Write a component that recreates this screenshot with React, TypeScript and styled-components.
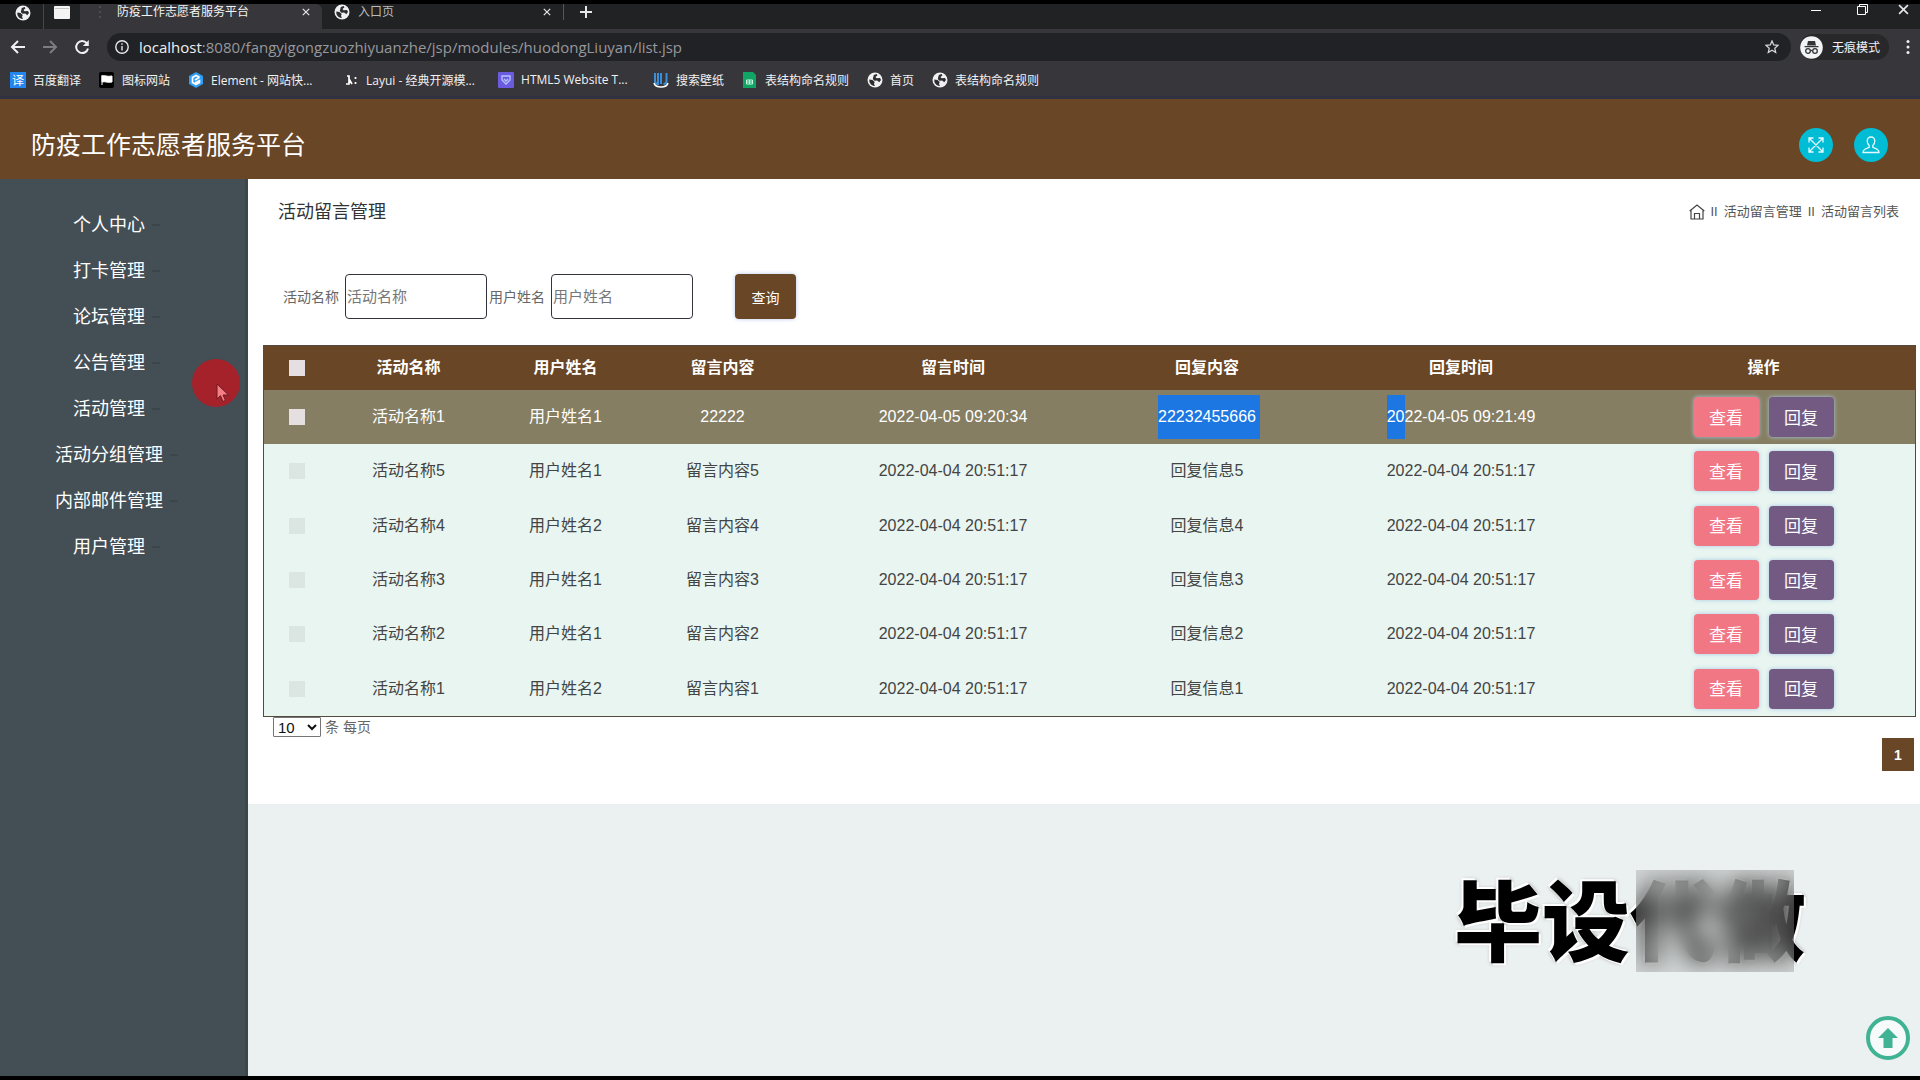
import React from "react";
import styled, { createGlobalStyle } from "styled-components";

const cjk = `"Noto Sans CJK SC", sans-serif`;
const pageFont = `"Liberation Sans", ${cjk}`;
const chromeFont = `"Open Sans", ${cjk}`;
const brown = "#684626";

const GlobalStyle = createGlobalStyle`
  *, *::before, *::after { box-sizing: border-box; }
  body { margin: 0; background: #000; font-family: ${pageFont}; }
  button, input, select { font-family: inherit; }
  a { color: inherit; text-decoration: none; }
  svg { display: block; flex: none; }
`;

const Screen = styled.div`
  display: flex;
  flex-direction: column;
  min-height: 100vh;
  padding: 4px 0;
`;

/* ---------- browser window ---------- */
const Browser = styled.header`
  background: #37363a;
  color: #f1f1f3;
  font-family: ${chromeFont};
  font-size: 12px;
`;

const TabStrip = styled.div`
  display: flex;
  align-items: stretch;
  height: 25px;
  background: #202223;
`;

const PinnedTab = styled.button<{ $divided?: boolean }>`
  display: flex;
  align-items: center;
  justify-content: center;
  width: ${(p) => (p.$divided ? 44 : 36)}px;
  padding: 0 0 8px ${(p) => (p.$divided ? 3 : 0)}px;
  border: 0;
  border-right: ${(p) => (p.$divided ? "1px solid #45474a" : "0")};
  background: none;
`;

const Tab = styled.div<{ $active?: boolean }>`
  display: flex;
  align-items: center;
  gap: 8px;
  width: ${(p) => (p.$active ? 242 : 241)}px;
  padding: 0 10px 9px 12px;
  border-radius: 0 6px 0 0;
  background: ${(p) => (p.$active ? "#37363a" : "none")};
  color: ${(p) => (p.$active ? "#f4f4f4" : "#b9bbbe")};
`;

const TabTitle = styled.span`
  flex: 1;
  line-height: 16px;
  white-space: nowrap;
`;

const IconButton = styled.button<{ $w?: number }>`
  display: flex;
  align-items: center;
  justify-content: center;
  width: ${(p) => p.$w ?? 12}px;
  padding: 0;
  border: 0;
  background: none;
  color: #e6e6e8;
`;

const NewTab = styled(IconButton)`
  height: 16px;
  border-left: 1px solid #55575a;
`;

const WindowControls = styled.div`
  display: flex;
  gap: 4px;
  margin-left: auto;
  padding-bottom: 14px;
`;

const Toolbar = styled.div`
  display: flex;
  align-items: center;
  height: 34px;
  padding: 2px 0 0 2px;
`;

const AddressBar = styled.div`
  display: flex;
  flex: 1;
  align-items: center;
  gap: 10px;
  height: 28px;
  margin: 0 9px;
  padding: 0 12px 0 8px;
  border-radius: 14px;
  background: #212226;
`;

const Url = styled.span`
  flex: 1;
  color: #97989c;
  font-size: 15px;
  line-height: 20px;
`;

const UrlHost = styled.span`
  color: #f0f0f2;
`;

const Incognito = styled.div`
  display: flex;
  align-items: center;
  gap: 9px;
  height: 26px;
  margin-right: 7px;
  padding-right: 9px;
  border-radius: 13px;
  background: #28282b;
`;

const BookmarkBar = styled.nav`
  display: flex;
  gap: 18px;
  height: 36px;
  padding: 0 10px;
  border-bottom: 3px solid #303142;
`;

const Bookmark = styled.a<{ $cut?: boolean }>`
  display: flex;
  align-items: center;
  gap: 7px;
  min-width: ${(p) => (p.$cut ? 137 : 0)}px;
  white-space: nowrap;
`;

/* ---------- application ---------- */
const AppHeader = styled.header`
  display: flex;
  align-items: center;
  justify-content: space-between;
  height: 80px;
  padding: 12px 32px 0 31px;
  background: ${brown};
  color: #fff;
`;

const Brand = styled.h1`
  margin: 0;
  font-size: 25px;
  font-weight: 400;
  line-height: 40px;
`;

const HeaderActions = styled.div`
  display: flex;
  gap: 21px;
`;

const RoundButton = styled.button`
  display: flex;
  align-items: center;
  justify-content: center;
  width: 34px;
  height: 34px;
  padding: 0;
  border: 0;
  border-radius: 50%;
  background: #00bcd4;
  color: #e6fbff;
`;

const Body = styled.div`
  display: flex;
  flex: 1;
  background: #ebf1f0;
`;

const Sidebar = styled.nav`
  width: 248px;
  flex: none;
  padding: 23px 27px 0 0;
  border-right: 3px solid #3b4748;
  background: #444e55;
`;

const Menu = styled.ul`
  margin: 0;
  padding: 0;
  list-style: none;
`;

const MenuItem = styled.li`
  display: flex;
  justify-content: center;
`;

const MenuLink = styled.a`
  display: flex;
  align-items: center;
  color: #fff;
  font-size: 18px;
  line-height: 46px;

  &::after {
    content: "";
    width: 8px;
    height: 2px;
    margin: 0 -15px 0 7px;
    background: #3b454c;
  }
`;

const Content = styled.main`
  flex: 1;
  min-width: 0;
`;

const Panel = styled.section`
  padding: 0 6px 33px 15px;
  background: #fff;
`;

const PanelHead = styled.div`
  display: flex;
  align-items: center;
  justify-content: space-between;
  padding: 21px 15px 0;
  line-height: 24px;
`;

const PageTitle = styled.h2`
  margin: 0;
  color: #333;
  font-size: 18px;
  font-weight: 400;
`;

const Crumbs = styled.div`
  display: flex;
  align-items: center;
  gap: 6px;
  color: #555;
  font-size: 13px;
`;

const SearchForm = styled.form`
  display: flex;
  align-items: center;
  padding: 50px 20px 26px;
  font-size: 14px;
`;

const FieldLabel = styled.label`
  width: 62px;
  color: #666;
  line-height: 20px;
`;

const TextField = styled.input`
  width: 142px;
  height: 45px;
  margin-right: 2px;
  padding: 0 1px;
  border: 1px solid #33333d;
  border-radius: 4px;
  background: #fff;
  font-size: 15px;

  &::placeholder { color: #777; }
`;

const SearchButton = styled.button`
  width: 61px;
  height: 45px;
  margin-left: 40px;
  border: 0;
  border-radius: 4px;
  background: ${brown};
  box-shadow: 0 0 4px #b9c8ea;
  color: #fff;
  font-size: 14px;
`;

const DataTable = styled.table`
  width: 100%;
  border: 1px solid #554a3e;
  border-spacing: 0;
  table-layout: fixed;
  color: #444;
  font-size: 16px;
  line-height: 20px;
  text-align: center;
`;

const HeadRow = styled.tr`
  height: 44px;
  background: ${brown};
  color: #fff;
`;

const Row = styled.tr<{ $hover?: boolean }>`
  height: 54px;
  background: ${(p) => (p.$hover ? "#867e62" : "#e8f5f0")};
  color: ${(p) => (p.$hover ? "#fff" : "inherit")};

  &:nth-child(3n) { height: 55px; }
`;

const Head = styled.th`
  padding: 0 2px 0 0;
`;

const Cell = styled.td`
  padding: 0 2px 0 0;
  white-space: nowrap;
`;

const Tick = styled.input<{ $faint?: boolean }>`
  display: block;
  width: 16px;
  height: 16px;
  margin: 0 auto;
  appearance: none;
  background: ${(p) => (p.$faint ? "#dbe6e3" : "#e6dfe2")};
`;

const Selected = styled.span<{ $trail?: boolean }>`
  display: inline-block;
  height: 44px;
  padding-right: ${(p) => (p.$trail ? 4 : 0)}px;
  margin-right: ${(p) => (p.$trail ? -4 : 0)}px;
  background: #1d77e2;
  line-height: 44px;
`;

const Actions = styled.div`
  display: flex;
  justify-content: center;
  gap: 10px;
`;

const ActionButton = styled.button<{ $tone: string }>`
  width: 65px;
  height: 40px;
  padding: 0 0 2px;
  border: 0;
  border-radius: 4px;
  background: ${(p) => p.$tone};
  box-shadow: 0 0 4px #a9c8e4;
  color: #fff;
  font-size: 17px;
`;

const PageSize = styled.div`
  display: flex;
  align-items: center;
  gap: 4px;
  padding-left: 10px;
  color: #666;
  font-size: 14px;
  line-height: 20px;
`;

const SizeSelect = styled.select`
  width: 48px;
  height: 20px;
  border: 1px solid #767676;
  border-radius: 1px;
  background: #fff;
  color: #111;
  font-size: 15px;
`;

const Pager = styled.div`
  display: flex;
  justify-content: flex-end;
  padding-top: 1px;
`;

const PageButton = styled.button`
  width: 32px;
  height: 33px;
  padding: 0;
  border: 0;
  background: ${brown};
  color: #fff;
  font-size: 14px;
  font-weight: 700;
`;

/* ---------- overlays ---------- */
const Watermark = styled.div`
  position: fixed;
  right: 114px;
  bottom: 113px;
  color: #000;
  font-family: ${cjk};
  font-size: 88px;
  font-weight: 900;
  line-height: 102px;
  text-shadow: 0 0 2px #fff, 2px 2px 0 #fff, -2px -2px 0 #fff, 0 0 4px #888;
`;

const Censor = styled.div`
  position: absolute;
  top: 5px;
  right: 12px;
  width: 158px;
  height: 102px;
  background: rgba(150, 150, 150, 0.3);
  backdrop-filter: blur(12px);
`;

const BackToTop = styled.button`
  position: fixed;
  right: 10px;
  bottom: 20px;
  display: flex;
  align-items: center;
  justify-content: center;
  width: 44px;
  height: 44px;
  padding: 0;
  border: 4px solid #3fb393;
  border-radius: 50%;
  background: #f6fafa;
`;

const ClickSpot = styled.div`
  position: absolute;
  top: 359px;
  left: 192px;
  width: 48px;
  height: 48px;
  padding: 24px 0 0 24px;
  border-radius: 50%;
  background: #a5222b;
`;

/* ---------- drawings ---------- */
const Globe = () => (
  <svg width="16" height="16" viewBox="0 0 16 16">
    <circle cx="8" cy="8" r="7.5" fill="#f1f1f3" />
    <path d="M2.300 7.500 5.500 8l2.200 2-.7 1.700.9 2.300-1.800-.2A6.300 6.300 0 0 1 2.300 7.500ZM6.800 3l2.800-1 .9 1.200-2 1.800 1 1.200 3.500-.2 1 2-1.800 2.200-2-1.600-2.800.2L5.800 7Z" fill="#2c2d30" />
  </svg>
);

const Cross = ({ size = 8 }: { size?: number }) => (
  <svg width={size} height={size} viewBox="0 0 10 10" stroke="currentColor" strokeWidth="1.500">
    <path d="M1 1l8 8M9 1l-8 8" />
  </svg>
);

const Arrow = ({ back }: { back?: boolean }) => (
  <svg width="16" height="16" viewBox="0 0 16 16" fill="none" stroke={back ? "#f1f1f3" : "#7c7d80"} strokeWidth="2">
    <path d={back ? "M15 8H2M8 2 2 8l6 6" : "M1 8h13M8 2l6 6-6 6"} />
  </svg>
);

const BookmarkIcon = ({ kind }: { kind: string }) => {
  if (kind === "globe") return <Globe />;
  return (
    <svg width="16" height="16" viewBox="0 0 16 16">
      {kind === "translate" && (
        <>
          <rect width="16" height="16" fill="#2286f0" />
          <text x="8" y="12.500" textAnchor="middle" fontSize="12" fill="#fff" fontFamily="Noto Sans CJK SC">译</text>
        </>
      )}
      {kind === "flag" && (
        <>
          <rect width="15" height="16" rx="2" fill="#000" />
          <path d="M3 3v10M3 4c3-1 5 1 10 0v6c-5 1-7-1-10 0Z" fill="#fff" stroke="#fff" />
        </>
      )}
      {kind === "element" && (
        <>
          <path d="M8 0l7 4v8l-7 4-7-4V4Z" fill="#2f9df4" />
          <path d="M11.500 5.300 8 3.500 4.500 5.500v5L8 12.500l3.500-2V8.600L7 11M11.500 5.300 7 8" fill="none" stroke="#fff" strokeWidth="1.700" />
        </>
      )}
      {kind === "layui" && <path d="M4 4h2v8H3M6 7l3 5M12.500 5v2M12.500 10v2" fill="none" stroke="#fff" strokeWidth="1.700" />}
      {kind === "html5" && (
        <>
          <rect width="16" height="16" rx="1" fill="#6a5be0" />
          <path d="M4 4h8v4l-4 4-4-4ZM6 7l2 2 2-2" fill="none" stroke="#b9c5ff" strokeWidth="1.300" />
        </>
      )}
      {kind === "wallpaper" && (
        <>
          <path d="M2 1v8q0 3 3 3V1M8 1v11M13.500 1v8q0 3-3 3" fill="none" stroke="#3c8ed8" strokeWidth="2" />
          <path d="M1 11q1 4 7 4t7-4" fill="none" stroke="#fff" strokeWidth="1.500" />
        </>
      )}
      {kind === "sheet" && (
        <>
          <path d="M1 0h10l3 3v13H1Z" fill="#11a565" />
          <path d="M4.500 8h6v4h-6ZM7.500 8v4M4.500 10h6" fill="none" stroke="#c7f5df" />
        </>
      )}
    </svg>
  );
};

/* ---------- data ---------- */
const bookmarks = [
  { icon: "translate", label: "百度翻译" },
  { icon: "flag", label: "图标网站" },
  { icon: "element", label: "Element - 网站快...", cut: true },
  { icon: "layui", label: "Layui - 经典开源模...", cut: true },
  { icon: "html5", label: "HTML5 Website T...", cut: true },
  { icon: "wallpaper", label: "搜索壁纸" },
  { icon: "sheet", label: "表结构命名规则" },
  { icon: "globe", label: "首页" },
  { icon: "globe", label: "表结构命名规则" },
];

const menu = ["个人中心", "打卡管理", "论坛管理", "公告管理", "活动管理", "活动分组管理", "内部邮件管理", "用户管理"];

const columns = [
  { title: "活动名称", width: 157 },
  { title: "用户姓名", width: 157 },
  { title: "留言内容", width: 157 },
  { title: "留言时间", width: 304 },
  { title: "回复内容", width: 204 },
  { title: "回复时间", width: 304 },
  { title: "操作", width: 301 },
];

const rows = [
  ["活动名称5", "用户姓名1", "留言内容5", "回复信息5"],
  ["活动名称4", "用户姓名2", "留言内容4", "回复信息4"],
  ["活动名称3", "用户姓名1", "留言内容3", "回复信息3"],
  ["活动名称2", "用户姓名1", "留言内容2", "回复信息2"],
  ["活动名称1", "用户姓名2", "留言内容1", "回复信息1"],
];

const RowActions = () => (
  <Cell>
    <Actions>
      <ActionButton $tone="#f27785">查看</ActionButton>
      <ActionButton $tone="#735a83">回复</ActionButton>
    </Actions>
  </Cell>
);

export default function App() {
  return (
    <Screen>
      <GlobalStyle />
      <Browser>
        <TabStrip>
          <PinnedTab $divided aria-label="固定标签页一"><Globe /></PinnedTab>
          <PinnedTab aria-label="固定标签页二">
            <svg width="16" height="13" viewBox="0 0 16 13"><rect width="16" height="13" rx="1" fill="#f4f4f4" /><path d="M1 2.500h14" stroke="#c5c5c5" /></svg>
          </PinnedTab>
          <Tab $active>
            <svg width="17" height="14" viewBox="0 0 17 14" fill="#55565a"><circle cx="8" cy="2" r="1" /><circle cx="8" cy="7" r="1" /><circle cx="8" cy="12" r="1" /></svg>
            <TabTitle>防疫工作志愿者服务平台</TabTitle>
            <IconButton aria-label="关闭标签页"><Cross /></IconButton>
          </Tab>
          <Tab>
            <Globe />
            <TabTitle>入口页</TabTitle>
            <IconButton aria-label="关闭标签页"><Cross /></IconButton>
          </Tab>
          <NewTab $w={45} aria-label="新标签页">
            <svg width="12" height="12" viewBox="0 0 12 12" stroke="currentColor" strokeWidth="2"><path d="M6 0v12M0 6h12" /></svg>
          </NewTab>
          <WindowControls>
            <IconButton $w={42} aria-label="最小化">
              <svg width="10" height="10" viewBox="0 0 10 10" stroke="#fff"><path d="M0 5.500h10" /></svg>
            </IconButton>
            <IconButton $w={42} aria-label="还原">
              <svg width="11" height="11" viewBox="0 0 11 11" fill="none" stroke="#fff"><path d="M.5 2.500h8v8h-8ZM2.500 2V.500h8v8H9" /></svg>
            </IconButton>
            <IconButton $w={33} aria-label="关闭窗口"><Cross size={11} /></IconButton>
          </WindowControls>
        </TabStrip>
        <Toolbar>
          <IconButton $w={32} aria-label="后退"><Arrow back /></IconButton>
          <IconButton $w={32} aria-label="前进"><Arrow /></IconButton>
          <IconButton $w={32} aria-label="刷新">
            <svg width="16" height="16" viewBox="0 0 16 16"><path d="M12.800 4.200A6 6 0 1 0 14 9.500" fill="none" stroke="#f1f1f3" strokeWidth="2" /><path d="M14.800 1v6h-6Z" fill="#f1f1f3" /></svg>
          </IconButton>
          <AddressBar>
            <svg width="14" height="14" viewBox="0 0 14 14" fill="none" stroke="#e8e8ea" strokeWidth="1.400"><circle cx="7" cy="7" r="6.200" /><path d="M7 6v4.500M7 3.300v1.500" /></svg>
            <Url><UrlHost>localhost</UrlHost>:8080/fangyigongzuozhiyuanzhe/jsp/modules/huodongLiuyan/list.jsp</Url>
            <svg width="14" height="14" viewBox="0 0 14 14" fill="none" stroke="#d5d5d8" strokeWidth="1.300"><path d="M7 1l1.700 4 4.300.4-3.200 2.900.9 4.200L7 10.300l-3.700 2.200.9-4.200L1 5.400 5.300 5Z" /></svg>
          </AddressBar>
          <Incognito>
            <svg width="23" height="23" viewBox="0 0 23 23">
              <circle cx="11.500" cy="11.500" r="11.300" fill="#f1f3f4" />
              <path d="M8 5h7l1 4.500H7ZM4.500 10h14v1.200h-14Z" fill="#333438" />
              <g fill="none" stroke="#333438" strokeWidth="1.300"><circle cx="8" cy="15" r="2.300" /><circle cx="15" cy="15" r="2.300" /><path d="M10.300 14.500h2.400" /></g>
            </svg>
            无痕模式
          </Incognito>
          <IconButton $w={24} aria-label="菜单">
            <svg width="4" height="16" viewBox="0 0 4 16" fill="#f1f1f3"><circle cx="2" cy="2.500" r="1.500" /><circle cx="2" cy="8" r="1.500" /><circle cx="2" cy="13.500" r="1.500" /></svg>
          </IconButton>
        </Toolbar>
        <BookmarkBar>
          {bookmarks.map((b, i) => (
            <Bookmark key={i} href="#" $cut={b.cut}><BookmarkIcon kind={b.icon} />{b.label}</Bookmark>
          ))}
        </BookmarkBar>
      </Browser>

      <AppHeader>
        <Brand>防疫工作志愿者服务平台</Brand>
        <HeaderActions>
          <RoundButton aria-label="全屏">
            <svg width="16" height="16" viewBox="0 0 16 16" fill="none" stroke="currentColor" strokeWidth="1.300"><path d="M1 1l14 14M15 1 1 15M1 5.500V1h4.500M10.500 1H15v4.500M15 10.500V15h-4.500M5.500 15H1v-4.500" /></svg>
          </RoundButton>
          <RoundButton aria-label="用户">
            <svg width="18" height="18" viewBox="0 0 18 18" fill="none" stroke="currentColor" strokeWidth="1.300"><path d="M9 1C6.500 1 5.200 2.800 5.200 5c0 2 .8 3.600 2 4.600v1.800L3 13.200C1.500 14 1 15 1 16.500h16c0-1.500-.5-2.500-2-3.300l-4.200-1.800V9.600c1.200-1 2-2.600 2-4.600 0-2.200-1.300-4-3.800-4Z" /></svg>
          </RoundButton>
        </HeaderActions>
      </AppHeader>

      <Body>
        <Sidebar>
          <Menu>
            {menu.map((m) => (
              <MenuItem key={m}><MenuLink href="#">{m}</MenuLink></MenuItem>
            ))}
          </Menu>
        </Sidebar>
        <Content>
          <Panel>
            <PanelHead>
              <PageTitle>活动留言管理</PageTitle>
              <Crumbs>
                <svg width="16" height="16" viewBox="0 0 16 16" fill="none" stroke="#444" strokeWidth="1.200"><path d="M.7 7 8 1l7.300 6M2 6v9h12V6M5.500 15V9.500h5V15" /></svg>
                <span>II</span>
                <a href="#">活动留言管理</a>
                <span>II</span>
                <span>活动留言列表</span>
              </Crumbs>
            </PanelHead>
            <SearchForm onSubmit={(e) => e.preventDefault()}>
              <FieldLabel htmlFor="activity">活动名称</FieldLabel>
              <TextField id="activity" placeholder="活动名称" />
              <FieldLabel htmlFor="person">用户姓名</FieldLabel>
              <TextField id="person" placeholder="用户姓名" />
              <SearchButton>查询</SearchButton>
            </SearchForm>
            <DataTable>
              <colgroup>
                <col width={67} />
                {columns.map((c) => <col key={c.title} width={c.width} />)}
              </colgroup>
              <thead>
                <HeadRow>
                  <Head><Tick type="checkbox" aria-label="全选" /></Head>
                  {columns.map((c) => <Head key={c.title}>{c.title}</Head>)}
                </HeadRow>
              </thead>
              <tbody>
                <Row $hover>
                  <Cell><Tick type="checkbox" aria-label="选择" /></Cell>
                  <Cell>活动名称1</Cell>
                  <Cell>用户姓名1</Cell>
                  <Cell>22222</Cell>
                  <Cell>2022-04-05 09:20:34</Cell>
                  <Cell><Selected $trail>22232455666</Selected></Cell>
                  <Cell><Selected>20</Selected>22-04-05 09:21:49</Cell>
                  <RowActions />
                </Row>
                {rows.map(([activity, person, message, reply]) => (
                  <Row key={activity}>
                    <Cell><Tick $faint type="checkbox" aria-label="选择" /></Cell>
                    <Cell>{activity}</Cell>
                    <Cell>{person}</Cell>
                    <Cell>{message}</Cell>
                    <Cell>2022-04-04 20:51:17</Cell>
                    <Cell>{reply}</Cell>
                    <Cell>2022-04-04 20:51:17</Cell>
                    <RowActions />
                  </Row>
                ))}
              </tbody>
            </DataTable>
            <PageSize>
              <SizeSelect id="size" aria-label="每页条数" defaultValue="10">
                <option>10</option>
                <option>25</option>
              </SizeSelect>
              <label htmlFor="size">条 每页</label>
            </PageSize>
            <Pager><PageButton>1</PageButton></Pager>
          </Panel>
        </Content>
      </Body>

      <Watermark>毕设代做<Censor /></Watermark>
      <BackToTop aria-label="返回顶部">
        <svg width="20" height="20" viewBox="0 0 20 20"><path d="M10 0l10 10h-5.500v10h-9V10H0Z" fill="#3fb393" /></svg>
      </BackToTop>
      <ClickSpot>
        <svg width="14" height="20" viewBox="0 0 14 20"><path d="M1 1v15l3.500-3.300L7 18.500l2.500-1.100L7 12h5.500Z" fill="#f47f84" stroke="#6d1a20" /></svg>
      </ClickSpot>
    </Screen>
  );
}
